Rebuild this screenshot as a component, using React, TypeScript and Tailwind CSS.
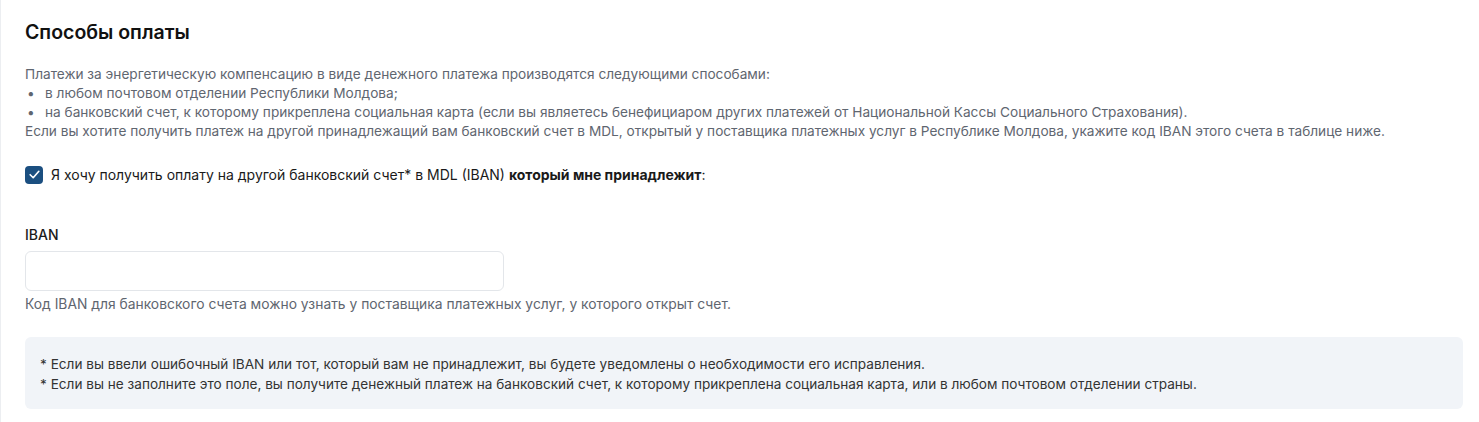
import React from "react";

export default function App() {
  return (
    <div
      className="w-[1479px] h-[422px] bg-white border-l border-[#eceef1] pl-6 pr-[16px] pt-[20px] text-[13.6px]"
      style={{ fontFamily: "Inter, 'Noto Sans', sans-serif" }}
    >
      <h2 className="text-[19.5px] font-semibold text-[#111] leading-[24px]">Способы оплаты</h2>
      <div className="mt-[21px] text-[#5f6670] leading-[19px] text-[13.65px]">
        <p>Платежи за энергетическую компенсацию в виде денежного платежа производятся следующими способами:</p>
        <ul>
          <li className="flex">
            <span className="w-[20px] pl-[2px]">•</span>
            <span>в любом почтовом отделении Республики Молдова;</span>
          </li>
          <li className="flex">
            <span className="w-[20px] pl-[2px]">•</span>
            <span>
              на банковский счет, к которому прикреплена социальная карта (если вы являетесь бенефициаром других платежей от Национальной Кассы Социального Страхования).
            </span>
          </li>
        </ul>
        <p>
          Если вы хотите получить платеж на другой принадлежащий вам банковский счет в MDL, открытый у поставщика платежных услуг в Республике Молдова, укажите код IBAN этого счета в таблице ниже.
        </p>
      </div>
      <label className="mt-[23px] flex items-center gap-[8px] text-[#1a1a1a] text-[14px]">
        <span className="w-[18px] h-[18px] rounded-[4px] bg-[#1b4f80] flex items-center justify-center">
          <svg width="13" height="13" viewBox="0 0 12 12" fill="none">
            <path d="M2 6.2 L4.8 9 L10 3" stroke="white" strokeWidth="1.5" strokeLinecap="round" strokeLinejoin="round" />
          </svg>
        </span>
        <span>
          Я хочу получить оплату на другой банковский счет* в MDL (IBAN) <b className="font-bold">который мне принадлежит</b>:
        </span>
      </label>
      <div className="mt-[40px] font-medium text-[#1a1a1a] leading-[20px] text-[14px]">IBAN</div>
      <div className="mt-[6px] w-[479px] h-[40px] rounded-[6px] border border-[#e3e6ea] bg-white" />
      <p className="mt-[4px] text-[#5f6670] leading-[19px] text-[13.85px]">
        Код IBAN для банковского счета можно узнать у поставщика платежных услуг, у которого открыт счет.
      </p>
      <div className="mt-[23px] h-[72px] rounded-[6px] bg-[#f1f4f8] px-[15px] py-[17px] text-[#333] leading-[20px]">
        <p>* Если вы ввели ошибочный IBAN или тот, который вам не принадлежит, вы будете уведомлены о необходимости его исправления.</p>
        <p>* Если вы не заполните это поле, вы получите денежный платеж на банковский счет, к которому прикреплена социальная карта, или в любом почтовом отделении страны.</p>
      </div>
    </div>
  );
}
